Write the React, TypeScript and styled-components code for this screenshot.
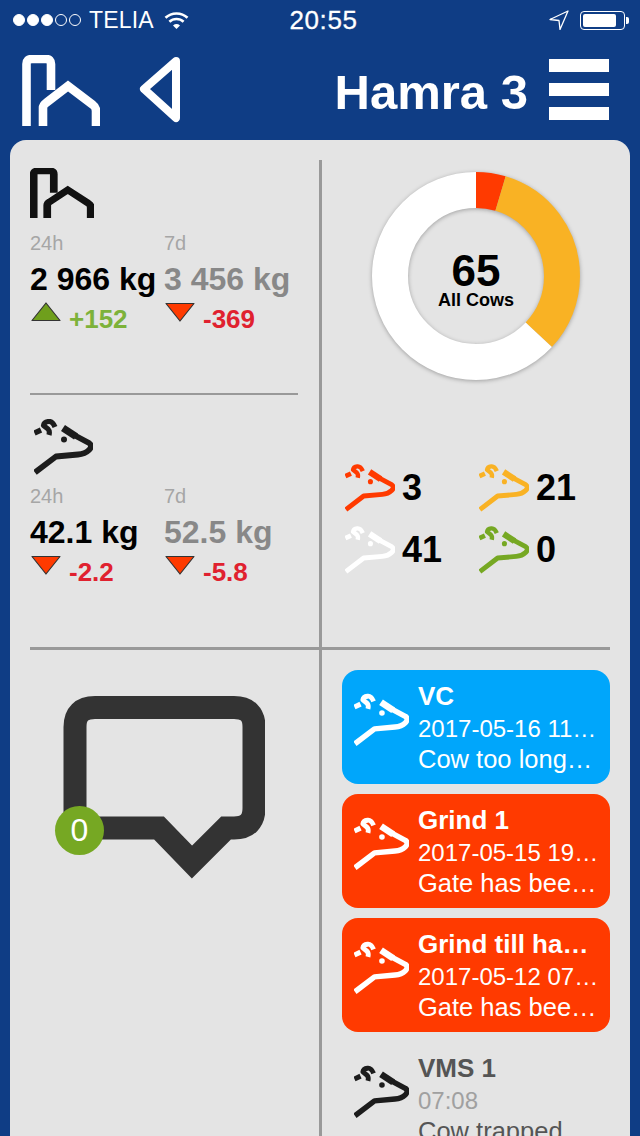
import * as React from 'react';
import styled, { createGlobalStyle } from 'styled-components';

const BLUE = '#0f3d85';
const RED = '#ff3a00';
const ORANGE = '#f9b224';
const GREEN = '#76a823';
const RULE = '#999999';

const herd = [
  { color: RED, count: 3 },
  { color: ORANGE, count: 21 },
  { color: '#ffffff', count: 41 },
  { color: GREEN, count: 0 },
];

const alarms = [
  { tone: 'blue', title: 'VC', time: '2017-05-16 11…', text: 'Cow too long…' },
  { tone: 'red', title: 'Grind 1', time: '2017-05-15 19…', text: 'Gate has bee…' },
  { tone: 'red', title: 'Grind till ha…', time: '2017-05-12 07…', text: 'Gate has bee…' },
  { tone: 'plain', title: 'VMS 1', time: '07:08', text: 'Cow trapped' },
] as const;

type Tone = 'blue' | 'red' | 'plain';

const HouseIcon = ({ color, weight, className }: { color: string; weight: number; className?: string }) => (
  <svg className={className} viewBox="0 0 78 71" preserveAspectRatio="none" fill="none" stroke={color} strokeWidth={weight}>
    <path d="M4.5 71V9Q4.5 4 10 4H24Q29 4 29 9V35" />
    <path d="M21 71V53Q21 50 24 48L46 31L71 50Q74 52 74 56V71" />
  </svg>
);

const CowIcon = ({ color, className }: { color: string; className?: string }) => (
  <svg className={className} viewBox="0 0 59 56" fill="none" stroke={color} strokeWidth="5.8" strokeLinejoin="round">
    <path d="M1 53.5L22 37.5L44 35.5Q51 35 55 31Q59 27 55 24L40 16" />
    <path d="M42 17.5L29 9" strokeWidth="7.2" />
    <path d="M21 8Q18.5 2 14.5 2.5Q10 3 9.5 6.5L14 10Q16 12 15 16" strokeWidth="5.2" />
    <path d="M0.5 14L7 11" strokeWidth="5.4" />
    <circle cx="30" cy="20.5" r="3" fill={color} stroke="none" />
  </svg>
);

const Trend = ({ up }: { up: boolean }) => (
  <TrendArrow viewBox="0 0 30 20" $up={up}>
    <path
      d={up ? 'M1 18.5H29L15 1Z' : 'M1 1.5H29L15 19Z'}
      fill={up ? '#6f9f1c' : RED}
      stroke="#333333"
      strokeWidth="1.2"
      strokeLinejoin="round"
    />
  </TrendArrow>
);

const Stat = ({ label, value, delta, muted }: { label: string; value: string; delta: string; muted?: boolean }) => {
  const up = delta.startsWith('+');
  return (
    <div>
      <StatLabel>{label}</StatLabel>
      <StatValue $muted={muted}>{value}</StatValue>
      <DeltaRow>
        <Trend up={up} />
        <DeltaText $up={up}>{delta}</DeltaText>
      </DeltaRow>
    </div>
  );
};

// ring segments are drawn clockwise from twelve o'clock
const Donut = () => {
  const radius = 86;
  const circumference = 2 * Math.PI * radius;
  const total = herd.reduce((sum, part) => sum + part.count, 0);
  let offset = 0;
  return (
    <DonutWrap>
      <DonutSvg viewBox="0 0 216 216">
        <g fill="none" strokeWidth="36" transform="rotate(-90 108 108)">
          {herd.map((part) => {
            const length = (part.count / total) * circumference;
            const segment = (
              <circle
                key={part.color}
                cx="108"
                cy="108"
                r={radius}
                stroke={part.color}
                strokeDasharray={`${length} ${circumference - length}`}
                strokeDashoffset={-offset}
              />
            );
            offset += length;
            return segment;
          })}
        </g>
      </DonutSvg>
      <DonutCenter>
        <DonutCount>{total}</DonutCount>
        <DonutCaption>All Cows</DonutCaption>
      </DonutCenter>
    </DonutWrap>
  );
};

export default function App() {
  return (
    <>
      <GlobalStyle />
      <Screen>
        <StatusBar>
          <StatusSide>
            <Signal>
              {[1, 1, 1, 0, 0].map((on, i) => (
                <SignalDot key={i} $on={!!on} />
              ))}
            </Signal>
            <Carrier>TELIA</Carrier>
            <svg width="25" height="19" viewBox="0 0 25 19" fill="none" stroke="#fff" strokeWidth="2.6">
              <path d="M1.5 6.8C7.5 1 17.5 1 23.5 6.8" />
              <path d="M5.4 10.8C9.4 7 15.6 7 19.6 10.8" />
              <path d="M12.5 18L9 14.4Q12.5 11.6 16 14.4Z" fill="#fff" stroke="none" />
            </svg>
          </StatusSide>
          <Clock>20:55</Clock>
          <StatusSide $end>
            <svg width="20" height="20" viewBox="0 0 20 20" fill="none" stroke="#fff" strokeWidth="1.3" strokeLinejoin="round">
              <path d="M19 1L1 9.5L10 10.5L11 19.5Z" />
            </svg>
            <Battery>
              <BatteryLevel />
            </Battery>
          </StatusSide>
        </StatusBar>

        <NavBar>
          <NavHouse color="#ffffff" weight={8.6} />
          <BackButton viewBox="0 0 44 68" fill="none" stroke="#fff" strokeWidth="8" strokeLinejoin="round">
            <path d="M38 5L6 33L38 62Z" />
          </BackButton>
          <Title>Hamra 3</Title>
          <Burger>
            <BurgerBar />
            <BurgerBar />
            <BurgerBar />
          </Burger>
        </NavBar>

        <Panel>
          <TopRow>
            <LeftColumn>
              <FarmBlock>
                <FarmHouse color="#111111" weight={9.4} />
                <StatGrid>
                  <Stat label="24h" value="2 966 kg" delta="+152" />
                  <Stat label="7d" value="3 456 kg" delta="-369" muted />
                </StatGrid>
              </FarmBlock>
              <CowBlock>
                <StatCow color="#1c1c1c" />
                <StatGrid>
                  <Stat label="24h" value="42.1 kg" delta="-2.2" />
                  <Stat label="7d" value="52.5 kg" delta="-5.8" muted />
                </StatGrid>
              </CowBlock>
            </LeftColumn>
            <RightColumn>
              <Donut />
              <Legend>
                {herd.map((part) => (
                  <LegendItem key={part.color}>
                    <LegendCow color={part.color} />
                    <LegendCount>{part.count}</LegendCount>
                  </LegendItem>
                ))}
              </Legend>
            </RightColumn>
          </TopRow>

          <BottomRow>
            <MessageColumn>
              <Bubble>
                <svg width="210" height="186" viewBox="55 696 210 186" fill="none" stroke="#333333" strokeWidth="23">
                  <path d="M95 707.5H234Q254 707.5 254 727V808Q254 828 234 828H226L192 862L159 828H75V727Q75 707.5 95 707.5Z" />
                </svg>
                <BubbleBadge>0</BubbleBadge>
              </Bubble>
            </MessageColumn>
            <AlarmColumn>
              {alarms.map((alarm) => (
                <AlarmCard key={alarm.title} $tone={alarm.tone}>
                  <AlarmCow color={alarm.tone === 'plain' ? '#1c1c1c' : '#ffffff'} />
                  <AlarmText>
                    <AlarmTitle $tone={alarm.tone}>{alarm.title}</AlarmTitle>
                    <AlarmTime $tone={alarm.tone}>{alarm.time}</AlarmTime>
                    <AlarmLine $tone={alarm.tone}>{alarm.text}</AlarmLine>
                  </AlarmText>
                </AlarmCard>
              ))}
            </AlarmColumn>
          </BottomRow>
        </Panel>
      </Screen>
    </>
  );
}

const GlobalStyle = createGlobalStyle`
  html, body {
    margin: 0;
    padding: 0;
    background: ${BLUE};
    font-family: "Liberation Sans", Arial, sans-serif;
  }
  svg {
    display: block;
  }
`;

const Screen = styled.div`
  width: 640px;
  height: 1136px;
  overflow: hidden;
  background: ${BLUE};
`;

const StatusBar = styled.div`
  display: flex;
  align-items: center;
  height: 40px;
  padding: 0 14px 0 13px;
  color: #fff;
`;

const StatusSide = styled.div<{ $end?: boolean }>`
  flex: 1;
  display: flex;
  align-items: center;
  justify-content: ${(p) => (p.$end ? 'flex-end' : 'flex-start')};
  gap: ${(p) => (p.$end ? '11px' : '10px')};
`;

const Signal = styled.div`
  display: flex;
  gap: 2px;
  margin-right: -2px;
`;

const SignalDot = styled.span<{ $on: boolean }>`
  width: 12px;
  height: 12px;
  box-sizing: border-box;
  border-radius: 50%;
  border: 1px solid #fff;
  background: ${(p) => (p.$on ? '#fff' : 'transparent')};
`;

const Carrier = styled.span`
  font-size: 23px;
  letter-spacing: 0.2px;
`;

const Clock = styled.span`
  font-size: 26px;
  font-weight: 400;
  letter-spacing: 0.6px;
  -webkit-text-stroke: 0.3px #fff;
  margin-left: 8px;
`;

const Battery = styled.div`
  position: relative;
  box-sizing: border-box;
  width: 45px;
  height: 19px;
  padding: 2px;
  border: 1px solid #fff;
  border-radius: 4px;
  margin-right: 1px;
  &::after {
    content: '';
    position: absolute;
    right: -5px;
    top: 5px;
    width: 3px;
    height: 7px;
    border-radius: 0 2px 2px 0;
    background: #fff;
  }
`;

const BatteryLevel = styled.div`
  width: 33px;
  height: 13px;
  border-radius: 2px;
  background: #fff;
`;

const NavBar = styled.div`
  box-sizing: border-box;
  display: flex;
  align-items: flex-start;
  height: 100px;
  padding: 15px 31px 0 22px;
`;

const NavHouse = styled(HouseIcon)`
  width: 78px;
  height: 71px;
`;

const BackButton = styled.svg`
  width: 44px;
  height: 68px;
  margin: 1px 0 0 38px;
`;

const Title = styled.h1`
  margin: 9px 0 0 auto;
  font-size: 49px;
  line-height: 56px;
  font-weight: 700;
  color: #fff;
`;

const Burger = styled.div`
  display: flex;
  flex-direction: column;
  gap: 11px;
  width: 60px;
  margin: 4px 0 0 21px;
`;

const BurgerBar = styled.span`
  height: 13px;
  background: #fff;
`;

const Panel = styled.div`
  box-sizing: border-box;
  margin: 0 10px;
  padding: 20px 20px 0;
  height: 996px;
  background: #e4e4e4;
  border-radius: 16px 16px 0 0;
  overflow: hidden;
`;

const TopRow = styled.div`
  display: flex;
  height: 487px;
  border-bottom: 3px solid ${RULE};
`;

const LeftColumn = styled.div`
  box-sizing: border-box;
  width: 292px;
  flex: none;
  border-right: 3px solid ${RULE};
`;

const RightColumn = styled.div`
  flex: 1;
`;

const FarmBlock = styled.div`
  box-sizing: border-box;
  width: 268px;
  height: 235px;
  padding-top: 8px;
  border-bottom: 2px solid ${RULE};
`;

const CowBlock = styled.div`
  padding-top: 24px;
`;

const FarmHouse = styled(HouseIcon)`
  width: 64px;
  height: 50px;
`;

const StatCow = styled(CowIcon)`
  width: 59px;
  height: 56px;
  margin: 0 0 -4px 4px;
`;

const StatGrid = styled.div`
  display: grid;
  grid-template-columns: 134px 150px;
  margin-top: 13px;
`;

const StatLabel = styled.div`
  font-size: 20px;
  line-height: 24px;
  color: #a6a6a6;
`;

const StatValue = styled.div<{ $muted?: boolean }>`
  margin-top: 5px;
  font-size: 32px;
  line-height: 38px;
  font-weight: 700;
  white-space: nowrap;
  color: ${(p) => (p.$muted ? '#888888' : '#000000')};
`;

const DeltaRow = styled.div`
  display: flex;
  margin-top: 4px;
`;

const TrendArrow = styled.svg<{ $up: boolean }>`
  width: 30px;
  height: 20px;
  margin-left: 1px;
`;

const DeltaText = styled.span<{ $up: boolean }>`
  margin: 2px 0 0 8px;
  font-size: 26px;
  line-height: 30px;
  font-weight: 700;
  color: ${(p) => (p.$up ? '#7db23a' : '#e0212f')};
`;

const DonutWrap = styled.div`
  position: relative;
  width: 216px;
  height: 216px;
  margin: 8px 0 0 46px;
`;

const DonutSvg = styled.svg`
  width: 216px;
  height: 216px;
  filter: drop-shadow(0 1px 2px rgba(0, 0, 0, 0.3));
`;

const DonutCenter = styled.div`
  position: absolute;
  inset: 0;
  padding-top: 10px;
  box-sizing: border-box;
  display: flex;
  flex-direction: column;
  align-items: center;
  justify-content: center;
  color: #000;
  font-weight: 700;
`;

const DonutCount = styled.div`
  font-size: 44px;
  line-height: 38px;
`;

const DonutCaption = styled.div`
  font-size: 18px;
  line-height: 20px;
`;

const Legend = styled.div`
  display: grid;
  grid-template-columns: 134px 134px;
  grid-auto-rows: 62px;
  margin: 73px 0 0 23px;
`;

const LegendItem = styled.div`
  display: flex;
  align-items: center;
  gap: 7px;
`;

const LegendCow = styled(CowIcon)`
  width: 50px;
  height: 52px;
  flex: none;
`;

const LegendCount = styled.span`
  font-size: 36px;
  font-weight: 700;
  color: #000;
`;

const BottomRow = styled.div`
  display: flex;
`;

const MessageColumn = styled.div`
  box-sizing: border-box;
  width: 292px;
  flex: none;
  height: 490px;
  padding: 46px 0 0 25px;
  border-right: 3px solid ${RULE};
`;

const Bubble = styled.div`
  position: relative;
  width: 210px;
`;

const BubbleBadge = styled.div`
  position: absolute;
  left: 0;
  top: 110px;
  width: 49px;
  height: 49px;
  border-radius: 50%;
  background: ${GREEN};
  color: #fff;
  font-size: 32px;
  line-height: 49px;
  text-align: center;
`;

const AlarmColumn = styled.div`
  display: flex;
  flex-direction: column;
  gap: 10px;
  flex: 1;
  min-width: 0;
  padding: 20px 0 0 20px;
`;

const toneBackground: Record<Tone, string> = {
  blue: '#00a6fb',
  red: RED,
  plain: 'transparent',
};

const AlarmCard = styled.div<{ $tone: Tone }>`
  display: flex;
  flex: none;
  box-sizing: border-box;
  height: 114px;
  padding: 11px 0 0 12px;
  border-radius: 16px;
  background: ${(p) => toneBackground[p.$tone]};
`;

const AlarmCow = styled(CowIcon)`
  width: 55px;
  height: 60px;
  flex: none;
  margin: 9px 9px 0 0;
`;

const AlarmText = styled.div`
  flex: 1;
  min-width: 0;
`;

const AlarmRow = styled.div<{ $tone: Tone }>`
  font-size: 25.5px;
  line-height: 31.5px;
  white-space: nowrap;
  color: ${(p) => (p.$tone === 'plain' ? '#555555' : '#ffffff')};
`;

const AlarmTitle = styled(AlarmRow)`
  font-size: 26px;
  font-weight: 700;
`;

const AlarmTime = styled(AlarmRow)`
  font-size: 24px;
  color: ${(p) => (p.$tone === 'plain' ? '#a0a0a0' : '#ffffff')};
`;

const AlarmLine = styled(AlarmRow)``;
